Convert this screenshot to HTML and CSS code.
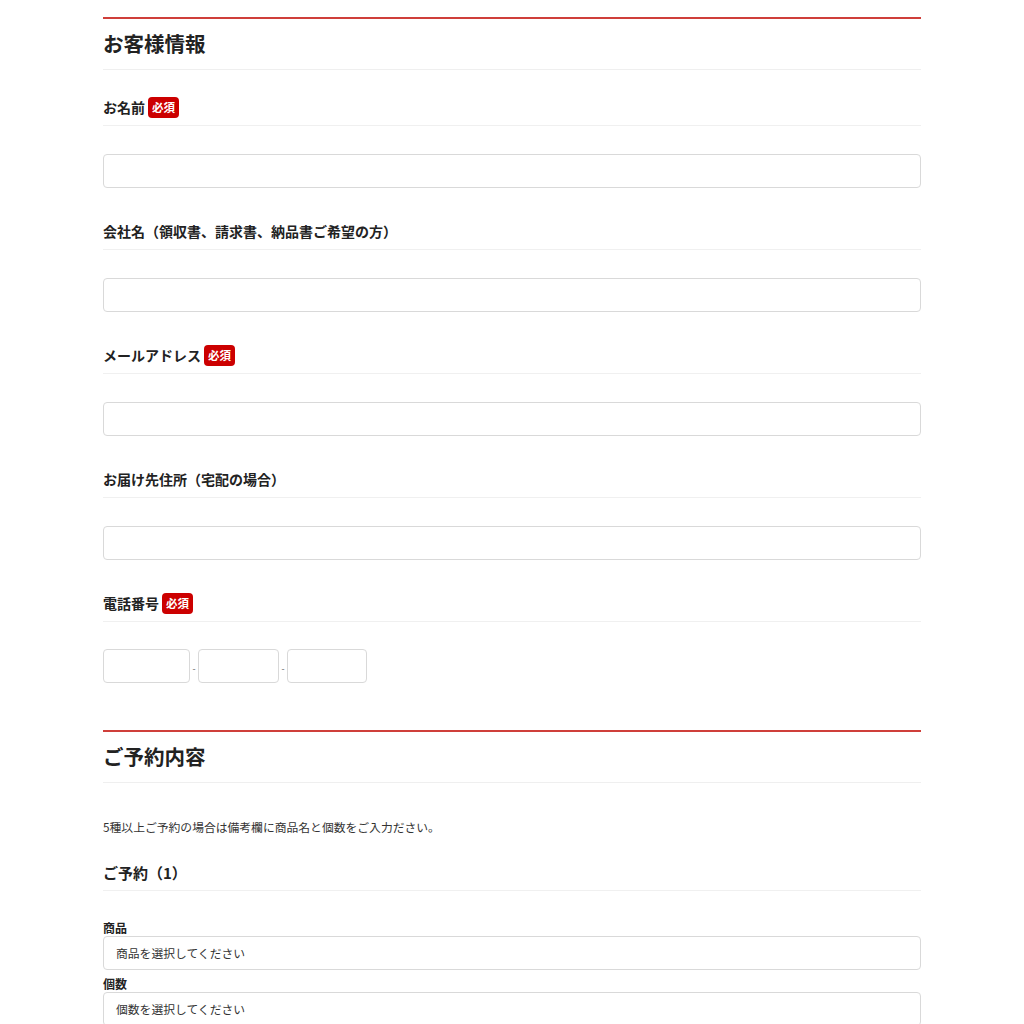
FILE: index.html
```html
<!DOCTYPE html>
<html lang="ja">
<head>
<meta charset="utf-8">
<link rel="stylesheet" href="styles.css">
</head>
<body>
<div class="page">
  <section class="section">
    <h2 class="section-title">お客様情報</h2>
    <div class="field">
      <div class="field-label">お名前<span class="req">必須</span></div>
      <input class="text-input" type="text">
    </div>
    <div class="field">
      <div class="field-label">会社名（領収書、請求書、納品書ご希望の方）</div>
      <input class="text-input" type="text">
    </div>
    <div class="field">
      <div class="field-label">メールアドレス<span class="req">必須</span></div>
      <input class="text-input" type="text">
    </div>
    <div class="field">
      <div class="field-label">お届け先住所（宅配の場合）</div>
      <input class="text-input" type="text">
    </div>
    <div class="field">
      <div class="field-label">電話番号<span class="req">必須</span></div>
      <div class="tel-row">
        <input class="text-input tel1" type="text"><span class="dash">-</span><input class="text-input tel2" type="text"><span class="dash">-</span><input class="text-input tel3" type="text">
      </div>
    </div>
  </section>
  <section class="section section-2">
    <h2 class="section-title">ご予約内容</h2>
    <p class="note">5種以上ご予約の場合は備考欄に商品名と個数をご入力ださい。</p>
    <h3 class="sub-title">ご予約（1）</h3>
    <div class="small-label first">商品</div>
    <div class="select-box">商品を選択してください</div>
    <div class="small-label">個数</div>
    <div class="select-box">個数を選択してください</div>
  </section>
</div>
</body>
</html>
```
FILE: styles.css
```css
* { box-sizing: border-box; }
html, body { margin: 0; padding: 0; background: #fff; }
body {
  font-family: "Noto Sans CJK JP", "Noto Sans", sans-serif;
  color: #333;
}
.page {
  width: 818px;
  margin: 0 auto;
  padding-top: 17px;
}
.section {
  border-top: 2px solid #cf3f3a;
}
.section-2 { margin-top: 47px; }
.section-title {
  margin: 0;
  font-size: 20.5px;
  font-weight: 700;
  line-height: 33px;
  padding: 8px 0 9px;
  color: #222;
  border-bottom: 1px solid #efefef;
}
.field { margin-top: 33px; }
.section-title + .field { margin-top: 27px; }
.field-label {
  font-size: 14px;
  font-weight: 700;
  line-height: 21px;
  padding-bottom: 7px;
  border-bottom: 1px solid #f0f0f0;
  display: flex;
  align-items: center;
  color: #222;
}
.req {
  display: inline-block;
  background: #cc0000;
  color: #fff;
  font-size: 11.5px;
  font-weight: 700;
  line-height: 17px;
  padding: 2px 4px;
  border-radius: 4px;
  margin-left: 3px;
}
.text-input {
  display: block;
  width: 100%;
  height: 34px;
  margin-top: 28px;
  border: 1px solid #d9d9d9;
  border-radius: 4px;
  background: #fff;
  padding: 0 10px;
  font: inherit;
}
.tel-row {
  display: flex;
  align-items: center;
  margin-top: 27px;
}
.tel-row .text-input { margin-top: 0; }
.tel1 { width: 87px !important; }
.tel2 { width: 81px !important; }
.tel3 { width: 80px !important; }
.dash {
  font-size: 9px;
  color: #666;
  width: 8px;
  text-align: center;
  padding-top: 4px;
}
.note {
  margin: 35px 0 0;
  font-size: 11.8px;
  line-height: 18px;
  color: #333;
}
.sub-title {
  margin: 26px 0 0;
  font-size: 15px;
  font-weight: 700;
  line-height: 22px;
  padding-bottom: 6px;
  border-bottom: 1px solid #f0f0f0;
  color: #222;
}
.small-label {
  font-size: 12px;
  font-weight: 700;
  line-height: 16px;
  margin-top: 6px;
  color: #222;
}
.small-label.first { margin-top: 29px; }
.select-box {
  height: 34px;
  border: 1px solid #d9d9d9;
  border-radius: 4px;
  font-size: 11.8px;
  line-height: 32px;
  padding-left: 12px;
  color: #333;
}
```
